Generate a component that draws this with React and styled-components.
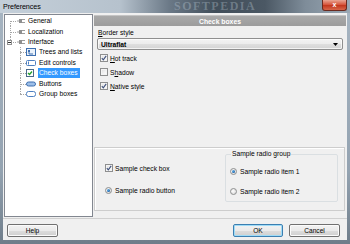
import React from "react";
import styled, { createGlobalStyle, css } from "styled-components";

const GlobalStyle = createGlobalStyle`
    html, body {
        margin: 0;
        padding: 0;
        width: 350px;
        height: 244px;
        overflow: hidden;
        background: #8e9daa;
    }
    body {
        font-family: "Liberation Sans", Arial, sans-serif;
        color: #000;
    }
    * {
        box-sizing: border-box;
    }
`;

const Window = styled.div`
    width: 350px;
    height: 244px;
    display: flex;
    flex-direction: column;
    background: linear-gradient(180deg, #a7b5c2 0%, #94a3b1 70%, #6f7d8a 100%);
`;

const TitleBar = styled.div`
    height: 13px;
    display: flex;
    align-items: center;
    position: relative;
    overflow: hidden;
    padding-left: 3px;
    background: linear-gradient(
        90deg,
        #c4cfd9 0px,
        #b6c2cd 120px,
        #6a7886 170px,
        #414e5a 215px,
        #4b5864 265px,
        #7e8c99 305px,
        #9aa8b4 350px
    );
`;

const Title = styled.div`
    font-size: 7.2px;
    letter-spacing: -0.1px;
    position: relative;
    z-index: 1;
`;

const Watermark = styled.div`
    position: absolute;
    left: 174px;
    top: 0;
    font-family: "Liberation Serif", serif;
    font-weight: bold;
    font-size: 12px;
    line-height: 12px;
    letter-spacing: 1.5px;
    color: rgba(190, 204, 216, 0.35);
`;

const CloseButton = styled.div`
    margin-left: auto;
    margin-right: 3px;
    align-self: flex-start;
    width: 25px;
    height: 11px;
    border: 1px solid #6b2a1f;
    border-top: none;
    border-radius: 0 0 3px 3px;
    background: linear-gradient(180deg, #e9a593 0%, #d7583f 45%, #c3391f 55%, #d8664a 100%);
    color: #fff;
    font-weight: bold;
    font-size: 7px;
    line-height: 10px;
    text-align: center;
    position: relative;
    z-index: 1;
`;

const Client = styled.div`
    flex: 1;
    margin: 0 3px 4px 3px;
    background: #f0f0f0;
    display: flex;
    flex-direction: column;
    font-size: 6.7px;
`;

const Main = styled.div`
    flex: 1;
    display: flex;
    gap: 1px;
    padding: 1px 1px 1px 1px;
    min-height: 0;
`;

/* ---------- tree ---------- */

const Tree = styled.div`
    width: 89px;
    background: #fff;
    border: 1px solid #828790;
    padding-top: 1px;
`;

const lineColor = "#a5a5a5";

const Row = styled.div`
    position: relative;
    height: 10.4px;
    display: flex;
    align-items: center;
    padding-left: ${(p) => (p.level ? 21 : 12)}px;
    white-space: nowrap;

    &::before {
        content: "";
        position: absolute;
        left: ${(p) => (p.level ? 15 : 5)}px;
        top: ${(p) => (p.first ? "50%" : "0")};
        bottom: ${(p) => (p.last ? "50%" : "0")};
        border-left: 1px dotted ${lineColor};
    }
    &::after {
        content: "";
        position: absolute;
        left: ${(p) => (p.level ? 15 : 5)}px;
        top: 50%;
        width: 6px;
        border-top: 1px dotted ${lineColor};
    }
`;

const Expander = styled.span`
    position: absolute;
    left: 2px;
    top: 3px;
    width: 5px;
    height: 5px;
    background: #fff;
    border: 1px solid #919191;
    z-index: 1;

    &::after {
        content: "";
        position: absolute;
        left: 0;
        top: 1px;
        width: 3px;
        height: 1px;
        background: #333;
    }
`;

const NodeIcon = styled.span`
    display: flex;
    align-items: center;
    width: ${(p) => (p.level ? 11 : 9)}px;
    margin-right: 1px;
`;

const NodeText = styled.span`
    height: 10px;
    line-height: 10px;
    padding: 0 1px;
    ${(p) =>
        p.selected &&
        css`
            background: #3399ff;
            color: #fff;
            padding-right: 2px;
        `}
`;

const RootIcon = () => (
    <svg width="8" height="6" viewBox="0 0 8 6">
        <path d="M0 3h2" stroke="#a0a0a0" strokeWidth="1" />
        <rect x="2" y="1" width="3" height="4" fill="#8f8f8f" />
        <path d="M5 1.5h3M5 4.5h3" stroke="#9d9d9d" strokeWidth="1" />
    </svg>
);

const TreesIcon = () => (
    <svg width="10" height="8" viewBox="0 0 10 8">
        <rect x="0.5" y="0.5" width="9" height="7" fill="#eaf2fb" stroke="#3d6fb0" />
        <rect x="2" y="2" width="2" height="2" fill="#3d6fb0" />
        <path d="M3 4v2h4" stroke="#3d6fb0" fill="none" />
    </svg>
);

const EditIcon = () => (
    <svg width="10" height="6" viewBox="0 0 10 6">
        <rect x="0.5" y="0.5" width="9" height="5" rx="1" fill="#fff" stroke="#4d7fc0" />
        <path d="M2.5 1.5v3" stroke="#4d7fc0" />
    </svg>
);

const CheckNodeIcon = () => (
    <svg width="8" height="8" viewBox="0 0 8 8">
        <rect x="0.5" y="0.5" width="7" height="7" fill="#fff" stroke="#4a6a8a" />
        <path d="M2 4l1.5 1.5L6 2.5" stroke="#23a02a" strokeWidth="1.3" fill="none" />
    </svg>
);

const ButtonIcon = () => (
    <svg width="10" height="6" viewBox="0 0 10 6">
        <rect x="0.5" y="1" width="9" height="4" rx="2" fill="#9dbfe8" stroke="#3e6fb0" />
    </svg>
);

const GroupIcon = () => (
    <svg width="10" height="6" viewBox="0 0 10 6">
        <rect x="0.5" y="0.5" width="9" height="5" rx="2" fill="#fff" stroke="#4d7fc0" />
    </svg>
);

const treeItems = [
    { text: "General", level: 0, icon: <RootIcon />, first: true },
    { text: "Localization", level: 0, icon: <RootIcon /> },
    { text: "Interface", level: 0, icon: <RootIcon />, last: true, open: true },
    { text: "Trees and lists", level: 1, icon: <TreesIcon /> },
    { text: "Edit controls", level: 1, icon: <EditIcon /> },
    { text: "Check boxes", level: 1, icon: <CheckNodeIcon />, selected: true },
    { text: "Buttons", level: 1, icon: <ButtonIcon /> },
    { text: "Group boxes", level: 1, icon: <GroupIcon />, last: true },
];

/* ---------- page ---------- */

const Page = styled.div`
    flex: 1;
    display: flex;
    flex-direction: column;
    padding-top: 1px;
`;

const PageHeader = styled.div`
    height: 11px;
    background: linear-gradient(180deg, #a9a9a9 0%, #9c9c9c 100%);
    border-top: 1px solid #c4c4c4;
    color: #fff;
    font-weight: bold;
    font-size: 6.8px;
    display: flex;
    align-items: center;
    justify-content: center;
`;

const TopSection = styled.div`
    padding: 3px 3px 0 3px;
`;

const FieldLabel = styled.div`
    height: 8px;
    line-height: 8px;
    padding-left: 1px;
`;

const Combo = styled.div`
    margin-top: 1px;
    height: 12px;
    border: 1px solid #8f8f8f;
    border-radius: 2px;
    background: linear-gradient(180deg, #f4f4f4 0%, #ececec 50%, #dfdfdf 51%, #d4d4d4 100%);
    box-shadow: inset 0 0 0 1px rgba(255, 255, 255, 0.7);
    display: flex;
    align-items: center;
    padding: 0 4px 0 3px;
    font-weight: bold;

    svg {
        margin-left: auto;
    }
`;

const CheckList = styled.div`
    margin-top: 1px;
    padding-left: 3px;
`;

const OptionRow = styled.div`
    height: 14px;
    display: flex;
    align-items: center;
    gap: ${(p) => (p.radio ? 3 : 2)}px;
    white-space: nowrap;
`;

const Box = styled.span`
    width: 8px;
    height: 8px;
    border: 1px solid #8e8f8f;
    background: linear-gradient(135deg, #dcdcdc 0%, #f4f4f4 60%, #ffffff 100%);
    box-shadow: inset 0 0 0 1px #f4f4f4;
    display: flex;
    align-items: center;
    justify-content: center;
    flex: none;
`;

const RadioDot = styled.span`
    width: 7px;
    height: 7px;
    border-radius: 50%;
    border: 1px solid #8e8f8f;
    background: radial-gradient(circle at 40% 40%, #ffffff 0%, #e4e4e4 60%, #cfcfcf 100%);
    display: flex;
    align-items: center;
    justify-content: center;
    flex: none;

    &::after {
        content: "";
        display: ${(p) => (p.checked ? "block" : "none")};
        width: 3px;
        height: 3px;
        border-radius: 50%;
        background: radial-gradient(circle at 35% 35%, #5fb2ec 0%, #1c62a8 70%, #0f4a80 100%);
    }
`;

const Check = ({ checked }) => (
    <Box>
        {checked && (
            <svg width="6" height="6" viewBox="0 0 6 6">
                <path d="M0.8 3.2L2.3 4.8L5.2 0.9" stroke="#3d4f7a" strokeWidth="1.1" fill="none" />
            </svg>
        )}
    </Box>
);

const SampleBox = styled.div`
    margin: auto 1px 6px 0;
    height: 64px;
    border: 1px solid #cdcdcd;
    box-shadow: inset 1px 1px 0 #ffffff;
    display: flex;
`;

const SampleLeft = styled.div`
    flex: 1;
    padding: 13px 0 0 10px;
    display: flex;
    flex-direction: column;
    gap: 8px;
`;

const RadioGroup = styled.fieldset`
    width: 113px;
    height: 52px;
    margin: 2px 6px 0 0;
    padding: 0 0 0 4px;
    border: 1px solid #dadfe2;
    border-radius: 2px;
    min-inline-size: 0;
    align-self: flex-start;
`;

const Legend = styled.legend`
    font-size: 6.7px;
    line-height: 8px;
    padding: 0 1px;
    margin-left: 1px;
`;

const RadioList = styled.div`
    padding-top: 6px;
    display: flex;
    flex-direction: column;
    gap: 6px;
`;

/* ---------- footer ---------- */

const Footer = styled.div`
    height: 22px;
    border-top: 1px solid #d0d0d0;
    display: flex;
    align-items: flex-start;
    padding: 5px 7px 0 4px;
    gap: 6px;
`;

const Button = styled.div`
    width: ${(p) => p.w}px;
    height: 13px;
    border: 1px solid ${(p) => (p.primary ? "#3c7fb1" : "#707070")};
    border-radius: 2px;
    background: linear-gradient(180deg, #f2f2f2 0%, #ebebeb 50%, #dddddd 51%, #cfcfcf 100%);
    box-shadow: inset 0 0 0 1px ${(p) => (p.primary ? "#9fdcf7" : "#fbfbfb")};
    display: flex;
    align-items: center;
    justify-content: center;
    font-size: 6.6px;
    margin-left: ${(p) => (p.push ? "auto" : "0")};
`;

const App = () => {
    return (
        <Window>
            <GlobalStyle />
            <TitleBar>
                <Title>Preferences</Title>
                <Watermark>SOFTPEDIA</Watermark>
                <CloseButton>x</CloseButton>
            </TitleBar>
            <Client>
                <Main>
                    <Tree>
                        {treeItems.map((item) => (
                            <Row key={item.text} level={item.level} first={item.first} last={item.last}>
                                {item.open && <Expander />}
                                <NodeIcon level={item.level}>{item.icon}</NodeIcon>
                                <NodeText selected={item.selected}>{item.text}</NodeText>
                            </Row>
                        ))}
                    </Tree>
                    <Page>
                        <PageHeader>Check boxes</PageHeader>
                        <TopSection>
                            <FieldLabel>
                                <u>B</u>order style
                            </FieldLabel>
                            <Combo>
                                Ultraflat
                                <svg width="5" height="3" viewBox="0 0 5 3">
                                    <path d="M0 0h5L2.5 3z" fill="#000" />
                                </svg>
                            </Combo>
                            <CheckList>
                                <OptionRow>
                                    <Check checked />
                                    <span>
                                        <u>H</u>ot track
                                    </span>
                                </OptionRow>
                                <OptionRow>
                                    <Check />
                                    <span>
                                        S<u>h</u>adow
                                    </span>
                                </OptionRow>
                                <OptionRow>
                                    <Check checked />
                                    <span>
                                        <u>N</u>ative style
                                    </span>
                                </OptionRow>
                            </CheckList>
                        </TopSection>
                        <SampleBox>
                            <SampleLeft>
                                <OptionRow>
                                    <Check checked />
                                    <span>Sample check box</span>
                                </OptionRow>
                                <OptionRow radio>
                                    <RadioDot checked />
                                    <span>Sample radio button</span>
                                </OptionRow>
                            </SampleLeft>
                            <RadioGroup>
                                <Legend>Sample radio group</Legend>
                                <RadioList>
                                    <OptionRow radio>
                                        <RadioDot checked />
                                        <span>Sample radio item 1</span>
                                    </OptionRow>
                                    <OptionRow radio>
                                        <RadioDot />
                                        <span>Sample radio item 2</span>
                                    </OptionRow>
                                </RadioList>
                            </RadioGroup>
                        </SampleBox>
                    </Page>
                </Main>
                <Footer>
                    <Button w={51}>Help</Button>
                    <Button w={50} primary push>
                        OK
                    </Button>
                    <Button w={51}>Cancel</Button>
                </Footer>
            </Client>
        </Window>
    );
};

export default App;
